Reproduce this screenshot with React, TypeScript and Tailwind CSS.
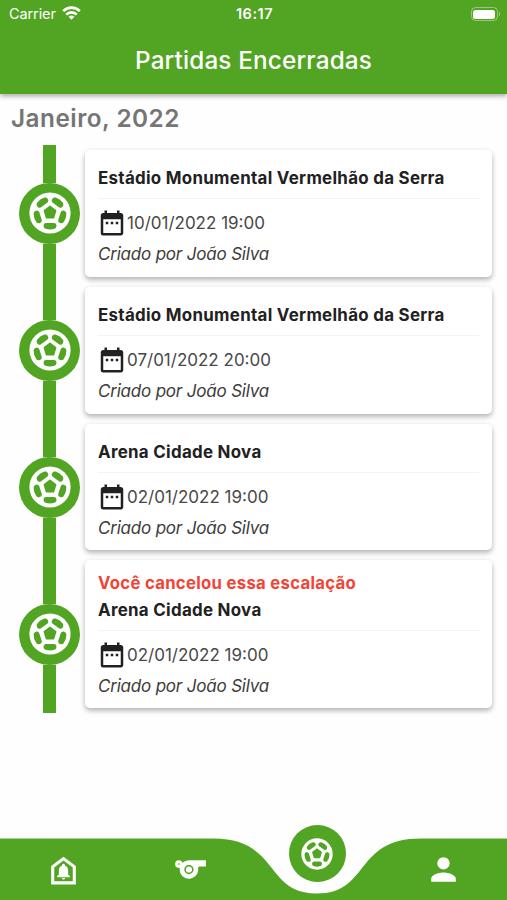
import { MdDateRange, MdPerson, MdSports } from "react-icons/md";

const MATCHES = [
  { id: 1, place: "Estádio Monumental Vermelhão da Serra", date: "10/01/2022 19:00", author: "João Silva", canceled: false },
  { id: 2, place: "Estádio Monumental Vermelhão da Serra", date: "07/01/2022 20:00", author: "João Silva", canceled: false },
  { id: 3, place: "Arena Cidade Nova", date: "02/01/2022 19:00", author: "João Silva", canceled: false },
  { id: 4, place: "Arena Cidade Nova", date: "02/01/2022 19:00", author: "João Silva", canceled: true },
];

const PATCH_ANGLES = [0, 72, 144, 216, 288];

function Ball({ className }: { className: string }) {
  return (
    <svg viewBox="-21 -21 42 42" className={className}>
      <circle r="20.6" fill="#fff" />
      <path
        d="M0-6.6 5.6-2.3 3.5 4.8H-3.5L-5.6-2.3Z"
        fill="#52a522"
        stroke="#52a522"
        strokeWidth="1.6"
        strokeLinejoin="round"
      />
      {PATCH_ANGLES.map((angle) => (
        <path
          key={angle}
          transform={`rotate(${angle})`}
          d="M-4.2 10H4.2Q6.5 10.3 6.5 12.7 6.5 15 4.5 15.8 0 17.4-4.5 15.8-6.5 15-6.5 12.7-6.5 10.3-4.2 10Z"
          fill="#52a522"
        />
      ))}
    </svg>
  );
}

function HomeBell({ className }: { className: string }) {
  return (
    <svg viewBox="0 0 24 24" className={className} fill="currentColor">
      <path d="M12 3 4 9v12h16V9l-8-6zm6 16H6v-9l6-4.5 6 4.5v9z" />
      <path d="M12 7.6c-.5 0-.85.35-.85.8v.4C9.8 9.2 9 10.4 9 11.9v2.7l-1.1 1v.7h8.2v-.7l-1.1-1v-2.7c0-1.5-.8-2.7-2.15-3.1v-.4c0-.45-.35-.8-.85-.8zm-1 9.3c0 .55.45 1 1 1s1-.45 1-1z" />
    </svg>
  );
}

function StatusBar() {
  return (
    <div className="grid h-7 grid-cols-3 items-center pr-[7px] pl-[9px]">
      <div className="flex items-center gap-1.5 text-[14.5px] tracking-[-0.1px]">
        Carrier
        <svg viewBox="0 0 19 14" className="-mt-0.5 h-[14px] w-[19px]" fill="none" stroke="#fff" strokeWidth="2.7">
          <path d="M1.2 5.1a11.8 11.8 0 0 1 16.6 0" />
          <path d="M4.3 8.6a7.4 7.4 0 0 1 10.4 0" />
          <path d="M9.5 13.8 6.6 10.8a4.2 4.2 0 0 1 5.8 0Z" fill="#fff" stroke="none" />
        </svg>
      </div>
      <div className="text-center text-[14.5px] font-semibold tracking-[0.5px]">16:17</div>
      <div className="flex items-center justify-end gap-px">
        <div className="h-[14px] w-[27px] rounded-[4.5px] border border-white/40 p-[1.5px]">
          <div className="h-full rounded-[2.5px] bg-white" />
        </div>
        <div className="h-1 w-[1.5px] rounded-r bg-white/40" />
      </div>
    </div>
  );
}

function MatchRow({ match }: { match: (typeof MATCHES)[number] }) {
  return (
    <li className={`flex pr-[15px] pl-[19px] ${match.canceled ? "h-[157.6px]" : "h-[136.8px]"}`}>
      <div className="flex w-[61px] flex-col items-center">
        <div className="w-[12.4px] flex-1 bg-[#52a522]" />
        <div className="flex size-[61px] items-center justify-center rounded-full bg-[#52a522]">
          <Ball className="size-[42px]" />
        </div>
        <div className="w-[12.4px] flex-1 bg-[#52a522]" />
      </div>
      <div
        className={`my-[5px] ml-[5px] flex-1 rounded-[5px] bg-white px-[13px] shadow-[0_3px_5px_rgba(0,0,0,0.24),0_1px_6px_rgba(0,0,0,0.08)] ${match.canceled ? "pt-[9.6px]" : "pt-[15.2px]"}`}
      >
        {match.canceled && (
          <p className="text-[16.7px] leading-[27px] font-bold tracking-[0.3px] text-[#f44336]">
            Você cancelou essa escalação
          </p>
        )}
        <h3 className="text-[16.9px] leading-[27px] font-bold tracking-[0.3px] whitespace-nowrap text-[#212121]">
          {match.place}
        </h3>
        <div className="mt-[6px] h-px bg-[#f4f4f4]" />
        <div className="mt-[9px] -ml-px flex h-[30px] items-center text-[#212121]">
          <MdDateRange className="size-[30px] shrink-0" />
          <span className="pt-[2px] text-[17px] text-[#484848]">{match.date}</span>
        </div>
        <p className="mt-px text-[17px] leading-[31px] tracking-[-0.2px] text-[#3c3c3c] italic">
          Criado por {match.author}
        </p>
      </div>
    </li>
  );
}

function BottomNav() {
  return (
    <nav className="relative h-[76px] shrink-0 text-white">
      <svg viewBox="0 0 507 76" className="absolute inset-0 h-full w-full">
        <path
          d="M0 14.5H213C280 14.5 264 69.5 317 69.5S354 14.5 421 14.5H507V76H0Z"
          fill="#52a522"
        />
      </svg>
      <div className="relative grid h-full grid-cols-4">
        <button className="flex items-start justify-center pt-[28px] pl-px">
          <HomeBell className="size-[37px]" />
        </button>
        <button className="flex items-start justify-center pt-[27px] pl-px">
          <MdSports className="size-[37px]" />
        </button>
        <button className="flex items-start justify-center pt-[1px] pl-px">
          <span className="flex size-[57px] items-center justify-center rounded-full bg-[#52a522]">
            <Ball className="size-8" />
          </span>
        </button>
        <button className="flex items-start justify-center pt-[27px]">
          <MdPerson className="size-[37px]" />
        </button>
      </div>
    </nav>
  );
}

export default function App() {
  return (
    <div className="flex h-[900px] w-[507px] flex-col overflow-hidden bg-[#fefefe] font-[Inter,sans-serif]">
      <header className="h-[94px] shrink-0 bg-[#52a522] text-white shadow-[0_2px_5px_rgba(0,0,0,0.35)]">
        <StatusBar />
        <h1 className="mt-[15px] text-center text-[24.3px] leading-[34px] font-medium tracking-[0.15px]">
          Partidas Encerradas
        </h1>
      </header>
      <main className="flex-1">
        <h2 className="h-[51px] pt-[9px] pl-[11px] text-[24.3px] leading-[30px] font-semibold tracking-[0.5px] text-[#757575]">
          Janeiro, 2022
        </h2>
        <ul>
          {MATCHES.map((match) => (
            <MatchRow key={match.id} match={match} />
          ))}
        </ul>
      </main>
      <BottomNav />
    </div>
  );
}
